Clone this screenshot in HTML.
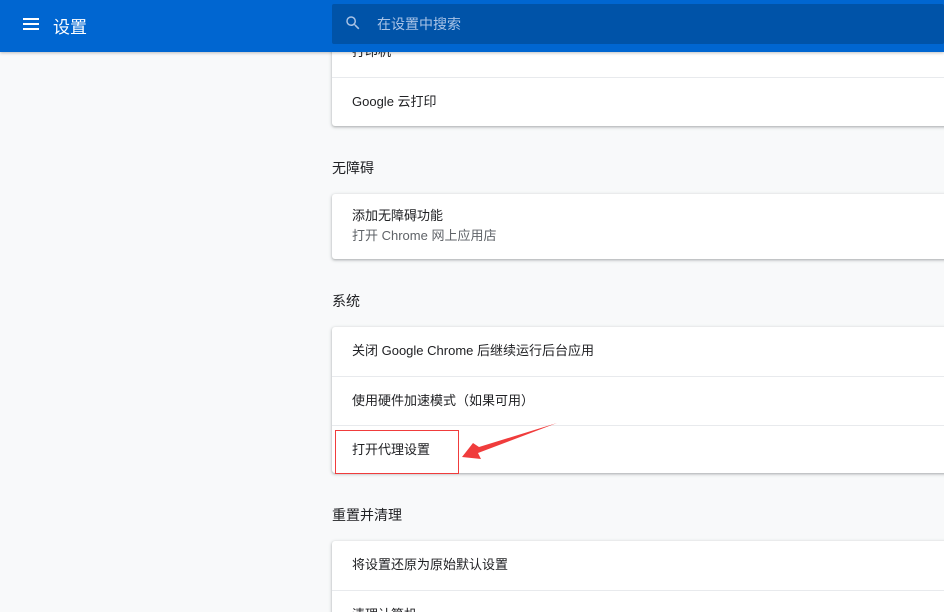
<!DOCTYPE html>
<html><head><meta charset="utf-8"><style>
*{margin:0;padding:0;box-sizing:border-box}
html{width:944px;height:612px;overflow:hidden}
body{width:944px;height:612px;overflow:hidden;background:#f8f9fa;font-family:"Liberation Sans","Noto Sans CJK SC",sans-serif;font-size:13px;color:#202124;position:relative}
.hdr{position:absolute;left:0;top:0;width:944px;height:52px;background:#0066d1;z-index:5;box-shadow:0 1px 3px rgba(0,0,0,.25)}
.menu{position:absolute;left:23px;top:18px;width:16px;height:12px;border-top:2px solid #fff;border-bottom:2px solid #fff}
.menu:after{content:"";position:absolute;left:0;top:3px;width:16px;height:2px;background:#fff}
.title{position:absolute;left:53px;top:13px;color:#fff;font-size:17px}
.search{position:absolute;left:332px;top:4px;width:612px;height:40px;background:#0053a8;border-radius:2px}
.search span{position:absolute;left:45px;top:10px;color:#a9c3e6;font-size:14px}
.search svg{position:absolute;left:12px;top:10px}
.card{position:absolute;left:332px;width:620px;background:#fff;border-radius:3px;box-shadow:0 1px 2px rgba(60,64,67,.3),0 1px 3px 1px rgba(60,64,67,.12)}
.row{height:49px;border-top:1px solid #e8eaed;padding-left:20px;line-height:48px}
.row:first-child{border-top:none}
.sec{position:absolute;left:332px;font-size:14px;color:#202124}
</style></head><body>
<div class="hdr"><div class="menu"></div><div class="title">设置</div>
<div class="search"><svg width="18" height="18" viewBox="0 0 24 24"><path fill="#a9c3e6" d="M15.5 14h-.79l-.28-.27A6.47 6.47 0 0016 9.5 6.5 6.5 0 109.5 16c1.61 0 3.090-.59 4.23-1.57l.27.28v.79l5 4.99L20.49 19l-4.99-5zm-6 0C7.01 14 5 11.99 5 9.5S7.01 5 9.5 5 14 7.01 14 9.5 11.99 14 9.5 14z"/></svg><span>在设置中搜索</span></div></div>

<div class="card" style="top:28px;height:98px"><div class="row">打印机</div><div class="row">Google 云打印</div></div>
<div class="sec" style="top:158px">无障碍</div>
<div class="card" style="top:194px;height:65px;padding:12px 20px;line-height:20px">添加无障碍功能<br><span style="color:#5f6368">打开 Chrome 网上应用店</span></div>
<div class="sec" style="top:291px">系统</div>
<div class="card" style="top:327px;height:146px"><div class="row">关闭 Google Chrome 后继续运行后台应用</div><div class="row">使用硬件加速模式（如果可用）</div><div class="row">打开代理设置</div></div>
<div class="sec" style="top:505px">重置并清理</div>
<div class="card" style="top:541px;height:100px"><div class="row">将设置还原为原始默认设置</div><div class="row">清理计算机</div></div>
<div style="position:absolute;left:335px;top:430px;width:124px;height:44px;border:1px solid #f03c3c;z-index:3"></div>
<svg style="position:absolute;left:0;top:0;z-index:4" width="944" height="612"><polygon fill="#f03c3c" points="557,423 479,447 473,443 462,457 481,459 478,453"/></svg>
</body></html>
